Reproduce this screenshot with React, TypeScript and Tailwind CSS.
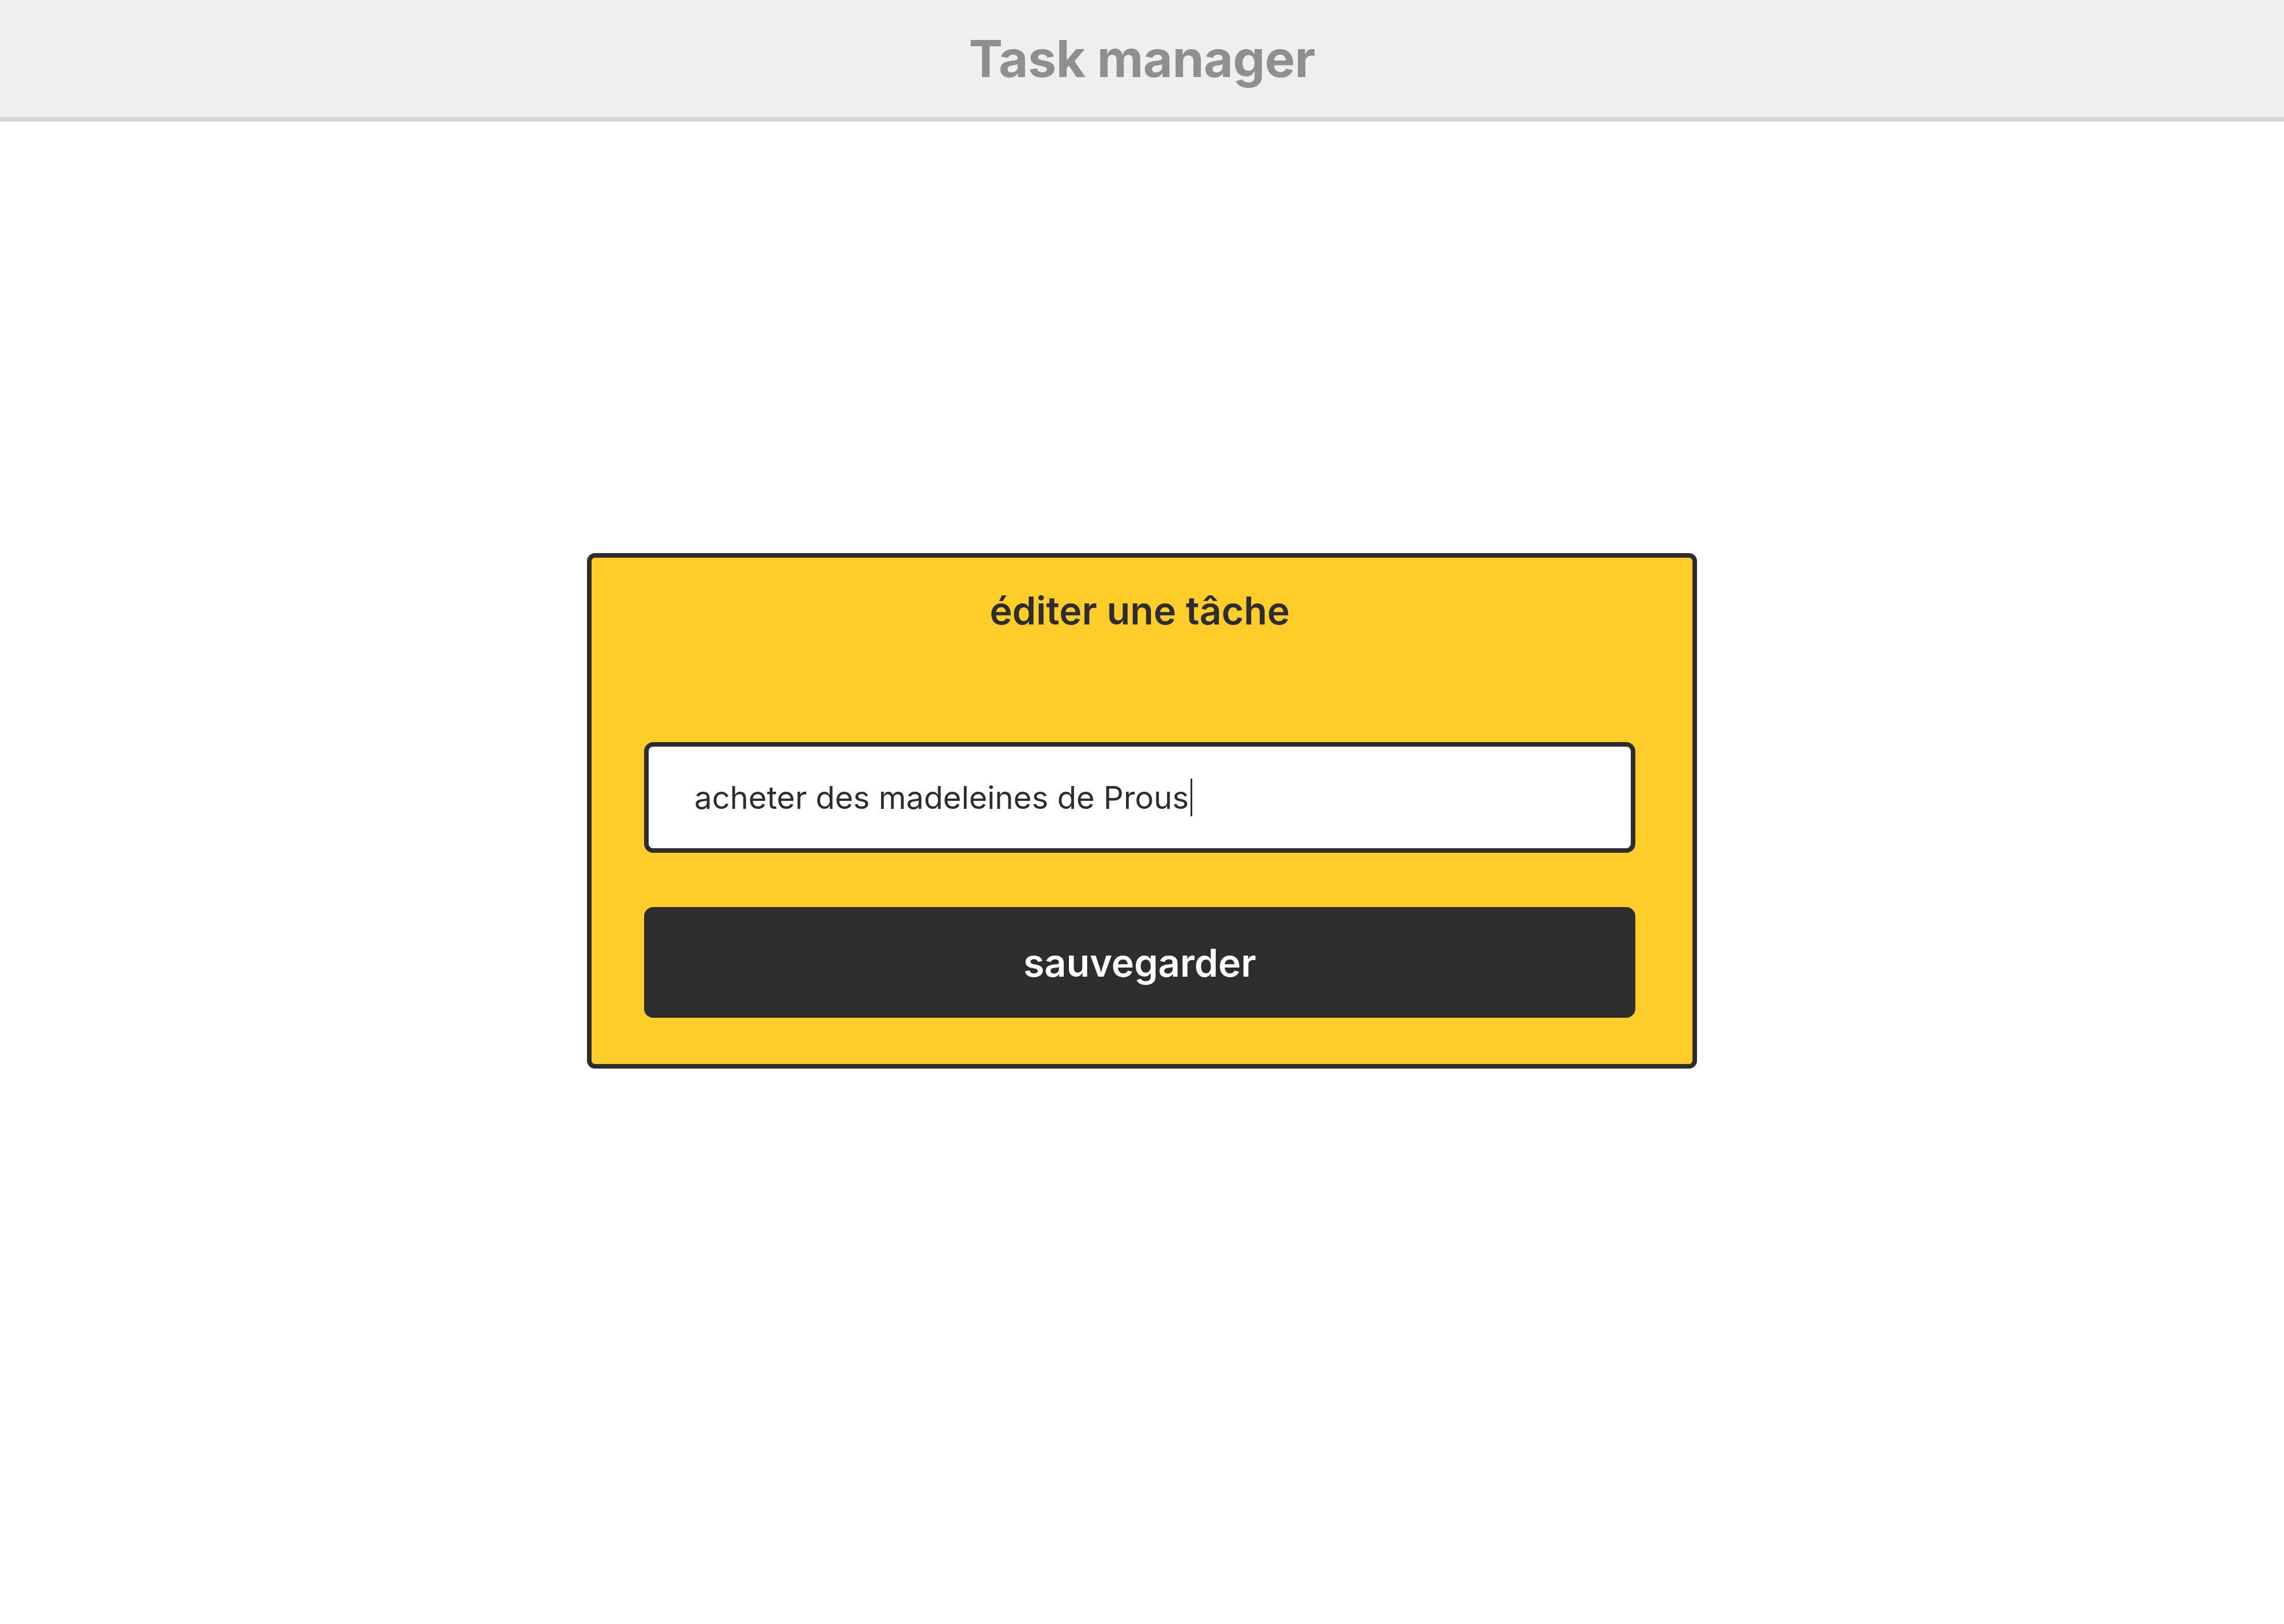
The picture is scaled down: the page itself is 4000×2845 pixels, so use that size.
import React from "react";

export default function App() {
  return (
    <div className="min-h-[2845px] w-full bg-white" style={{ fontFamily: "Inter, 'Noto Sans', sans-serif" }}>
      <header className="flex h-[213px] items-center justify-center border-b-[8px] border-[#d4d4d4] bg-[#efefef]">
        <h1 className="text-[89px] font-bold leading-none tracking-[-0.5px] text-[#8f8f8f]">Task manager</h1>
      </header>
      <main className="flex justify-center pt-[756px]">
        <div className="flex w-[1944px] flex-col rounded-[14px] border-[8px] border-[#2d2d2d] bg-[#fecd2a] pb-[81px] pl-[92px] pr-[100px] pt-[59px]">
          <h2 className="text-center text-[67px] font-semibold leading-none text-[#2d2d2d]">éditer une tâche</h2>
          <div className="mt-[197px] flex h-[194px] items-center rounded-[16px] border-[8px] border-[#2d2d2d] bg-white pl-[80px]">
            <span className="text-[55px] leading-none text-[#2d2d2d]">acheter des madeleines de Prous</span>
            <span className="ml-[3px] h-[66px] w-[3px] bg-[#2d2d2d]" />
          </div>
          <button className="mt-[95px] flex h-[194px] items-center justify-center rounded-[16px] bg-[#2d2d2d] text-[67px] font-semibold leading-none text-white">
            sauvegarder
          </button>
        </div>
      </main>
    </div>
  );
}
